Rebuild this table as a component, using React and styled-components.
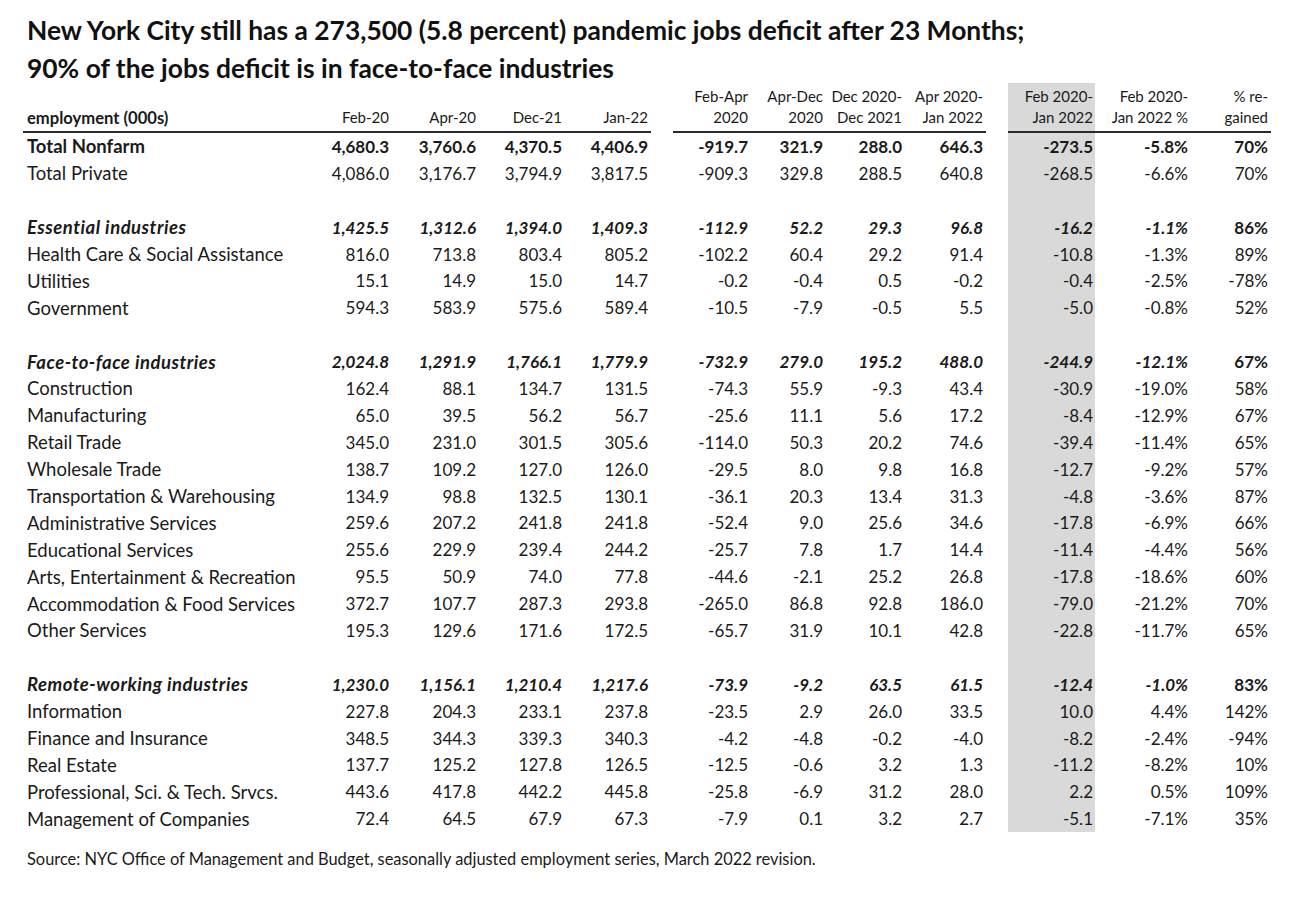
import React from "react";
import styled, { createGlobalStyle } from "styled-components";

const GlobalStyle = createGlobalStyle`
  html, body { margin: 0; padding: 0; background: #ffffff; }
  body { font-family: Lato, "Open Sans", "Liberation Sans", sans-serif; color: #1a1a1a; }
`;

const COLS = [
  { w: 277, kind: "label" },
  { w: 92, pad: 3 },
  { w: 87, pad: 3 },
  { w: 86, pad: 3 },
  { w: 86, pad: 3 },
  { w: 22, kind: "spacer" },
  { w: 78, pad: 3 },
  { w: 75, pad: 3 },
  { w: 79, pad: 3 },
  { w: 81, pad: 3 },
  { w: 22, kind: "spacer" },
  { w: 87, pad: 2, shaded: true },
  { w: 96, pad: 3 },
  { w: 80, pad: 3 },
];
const TEMPLATE = COLS.map((c) => `${c.w}px`).join(" ");

const Page = styled.div`
  padding: 11px 0 0 23px;
  width: 1300px;
  box-sizing: border-box;
`;

const Title = styled.h1`
  margin: 0 0 -4px 0;
  padding-left: 4px;
  font-size: 26.4px;
  line-height: 38px;
  font-weight: 700;
  color: #111;
`;

const TitleLine = styled.span`
  display: block;
  white-space: nowrap;
`;

const Table = styled.div`
  display: flex;
  flex-direction: column;
`;

const Row = styled.div`
  display: grid;
  grid-template-columns: ${TEMPLATE};
  height: ${(p) => p.$h}px;
`;

const Cell = styled.div`
  display: flex;
  align-items: ${(p) => p.$valign || "center"};
  justify-content: ${(p) => (p.$label ? "flex-start" : "flex-end")};
  padding: ${(p) => (p.$label ? "0 0 0 4px" : `0 ${p.$pad || 0}px 0 0`)};
  padding-bottom: ${(p) => p.$padBottom || 0}px;
  white-space: nowrap;
  font-size: ${(p) => (p.$header ? (p.$label ? "16.6px" : "15px") : p.$label ? "18.5px" : "17px")};
  letter-spacing: ${(p) => (p.$label && p.$italic ? "0.5px" : "0")};
  font-weight: ${(p) => (p.$bold ? 700 : 400)};
  font-style: ${(p) => (p.$italic ? "italic" : "normal")};
  background: ${(p) => (p.$shaded ? "#d9d9d9" : "transparent")};
  border-bottom: ${(p) => (p.$rule ? "2px solid #2a2a2a" : "none")};
  color: #1a1a1a;
`;

const Source = styled.p`
  margin: 17px 0 0 0;
  padding-left: 4px;
  font-size: 16.4px;
  line-height: 20px;
  color: #1a1a1a;
`;

const HEAD1 = ["", "", "", "", "", "", "Feb-Apr", "Apr-Dec", "Dec 2020-", "Apr 2020-", "", "Feb 2020-", "Feb 2020-", "% re-"];
const HEAD2 = ["employment (000s)", "Feb-20", "Apr-20", "Dec-21", "Jan-22", "", "2020", "2020", "Dec 2021", "Jan 2022", "", "Jan 2022", "Jan 2022 %", "gained"];

const DATA = [
  { label: "Total Nonfarm", style: "total", v: ["4,680.3", "3,760.6", "4,370.5", "4,406.9", "-919.7", "321.9", "288.0", "646.3", "-273.5", "-5.8%", "70%"] },
  { label: "Total Private", v: ["4,086.0", "3,176.7", "3,794.9", "3,817.5", "-909.3", "329.8", "288.5", "640.8", "-268.5", "-6.6%", "70%"] },
  null,
  { label: "Essential industries", style: "section", v: ["1,425.5", "1,312.6", "1,394.0", "1,409.3", "-112.9", "52.2", "29.3", "96.8", "-16.2", "-1.1%", "86%"] },
  { label: "Health Care & Social Assistance", v: ["816.0", "713.8", "803.4", "805.2", "-102.2", "60.4", "29.2", "91.4", "-10.8", "-1.3%", "89%"] },
  { label: "Utilities", v: ["15.1", "14.9", "15.0", "14.7", "-0.2", "-0.4", "0.5", "-0.2", "-0.4", "-2.5%", "-78%"] },
  { label: "Government", v: ["594.3", "583.9", "575.6", "589.4", "-10.5", "-7.9", "-0.5", "5.5", "-5.0", "-0.8%", "52%"] },
  null,
  { label: "Face-to-face industries", style: "section", v: ["2,024.8", "1,291.9", "1,766.1", "1,779.9", "-732.9", "279.0", "195.2", "488.0", "-244.9", "-12.1%", "67%"] },
  { label: "Construction", v: ["162.4", "88.1", "134.7", "131.5", "-74.3", "55.9", "-9.3", "43.4", "-30.9", "-19.0%", "58%"] },
  { label: "Manufacturing", v: ["65.0", "39.5", "56.2", "56.7", "-25.6", "11.1", "5.6", "17.2", "-8.4", "-12.9%", "67%"] },
  { label: "Retail Trade", v: ["345.0", "231.0", "301.5", "305.6", "-114.0", "50.3", "20.2", "74.6", "-39.4", "-11.4%", "65%"] },
  { label: "Wholesale Trade", v: ["138.7", "109.2", "127.0", "126.0", "-29.5", "8.0", "9.8", "16.8", "-12.7", "-9.2%", "57%"] },
  { label: "Transportation & Warehousing", v: ["134.9", "98.8", "132.5", "130.1", "-36.1", "20.3", "13.4", "31.3", "-4.8", "-3.6%", "87%"] },
  { label: "Administrative Services", v: ["259.6", "207.2", "241.8", "241.8", "-52.4", "9.0", "25.6", "34.6", "-17.8", "-6.9%", "66%"] },
  { label: "Educational Services", v: ["255.6", "229.9", "239.4", "244.2", "-25.7", "7.8", "1.7", "14.4", "-11.4", "-4.4%", "56%"] },
  { label: "Arts, Entertainment & Recreation", v: ["95.5", "50.9", "74.0", "77.8", "-44.6", "-2.1", "25.2", "26.8", "-17.8", "-18.6%", "60%"] },
  { label: "Accommodation & Food Services", v: ["372.7", "107.7", "287.3", "293.8", "-265.0", "86.8", "92.8", "186.0", "-79.0", "-21.2%", "70%"] },
  { label: "Other Services", v: ["195.3", "129.6", "171.6", "172.5", "-65.7", "31.9", "10.1", "42.8", "-22.8", "-11.7%", "65%"] },
  null,
  { label: "Remote-working industries", style: "section", v: ["1,230.0", "1,156.1", "1,210.4", "1,217.6", "-73.9", "-9.2", "63.5", "61.5", "-12.4", "-1.0%", "83%"] },
  { label: "Information", v: ["227.8", "204.3", "233.1", "237.8", "-23.5", "2.9", "26.0", "33.5", "10.0", "4.4%", "142%"] },
  { label: "Finance and Insurance", v: ["348.5", "344.3", "339.3", "340.3", "-4.2", "-4.8", "-0.2", "-4.0", "-8.2", "-2.4%", "-94%"] },
  { label: "Real Estate", v: ["137.7", "125.2", "127.8", "126.5", "-12.5", "-0.6", "3.2", "1.3", "-11.2", "-8.2%", "10%"] },
  { label: "Professional, Sci. & Tech. Srvcs.", v: ["443.6", "417.8", "442.2", "445.8", "-25.8", "-6.9", "31.2", "28.0", "2.2", "0.5%", "109%"] },
  { label: "Management of Companies", v: ["72.4", "64.5", "67.9", "67.3", "-7.9", "0.1", "3.2", "2.7", "-5.1", "-7.1%", "35%"] },
];

const ROW_H = 26.9;

function HeaderRow({ texts, second }) {
  return (
    <Row $h={25}>
      {COLS.map((c, i) => {
        const isLabel = c.kind === "label";
        const isSpacer = c.kind === "spacer";
        return (
          <Cell
            key={i}
            $label={isLabel}
            $header
            $bold={isLabel}
            $pad={c.pad}
            $shaded={c.shaded}
            $rule={second && !isSpacer}
            $valign={second ? "flex-start" : "flex-end"}
            $padBottom={second ? 0 : 3}
          >
            {texts[i]}
          </Cell>
        );
      })}
    </Row>
  );
}

function DataRow({ row }) {
  let vi = 0;
  return (
    <Row $h={ROW_H}>
      {COLS.map((c, i) => {
        if (!row) {
          return <Cell key={i} $shaded={c.shaded} />;
        }
        const isLabel = c.kind === "label";
        const isSpacer = c.kind === "spacer";
        if (isSpacer) return <Cell key={i} />;
        const text = isLabel ? row.label : row.v[vi++];
        const isLast = !isLabel && vi === 11;
        const bold = row.style === "total" || row.style === "section";
        const italic = row.style === "section" && !isLast;
        return (
          <Cell key={i} $label={isLabel} $pad={c.pad} $shaded={c.shaded} $bold={bold} $italic={italic}>
            {text}
          </Cell>
        );
      })}
    </Row>
  );
}

export default function App() {
  return (
    <>
      <GlobalStyle />
      <Page>
        <Title>
          <TitleLine>New York City still has a 273,500 (5.8 percent) pandemic jobs deficit after 23 Months;</TitleLine>
          <TitleLine>90% of the jobs deficit is in face-to-face industries</TitleLine>
        </Title>
        <Table>
          <HeaderRow texts={HEAD1} />
          <HeaderRow texts={HEAD2} second />
          {DATA.map((r, i) => (
            <DataRow key={i} row={r} />
          ))}
        </Table>
        <Source>
          Source: NYC Office of Management and Budget, seasonally adjusted employment series, March 2022 revision.
        </Source>
      </Page>
    </>
  );
}
